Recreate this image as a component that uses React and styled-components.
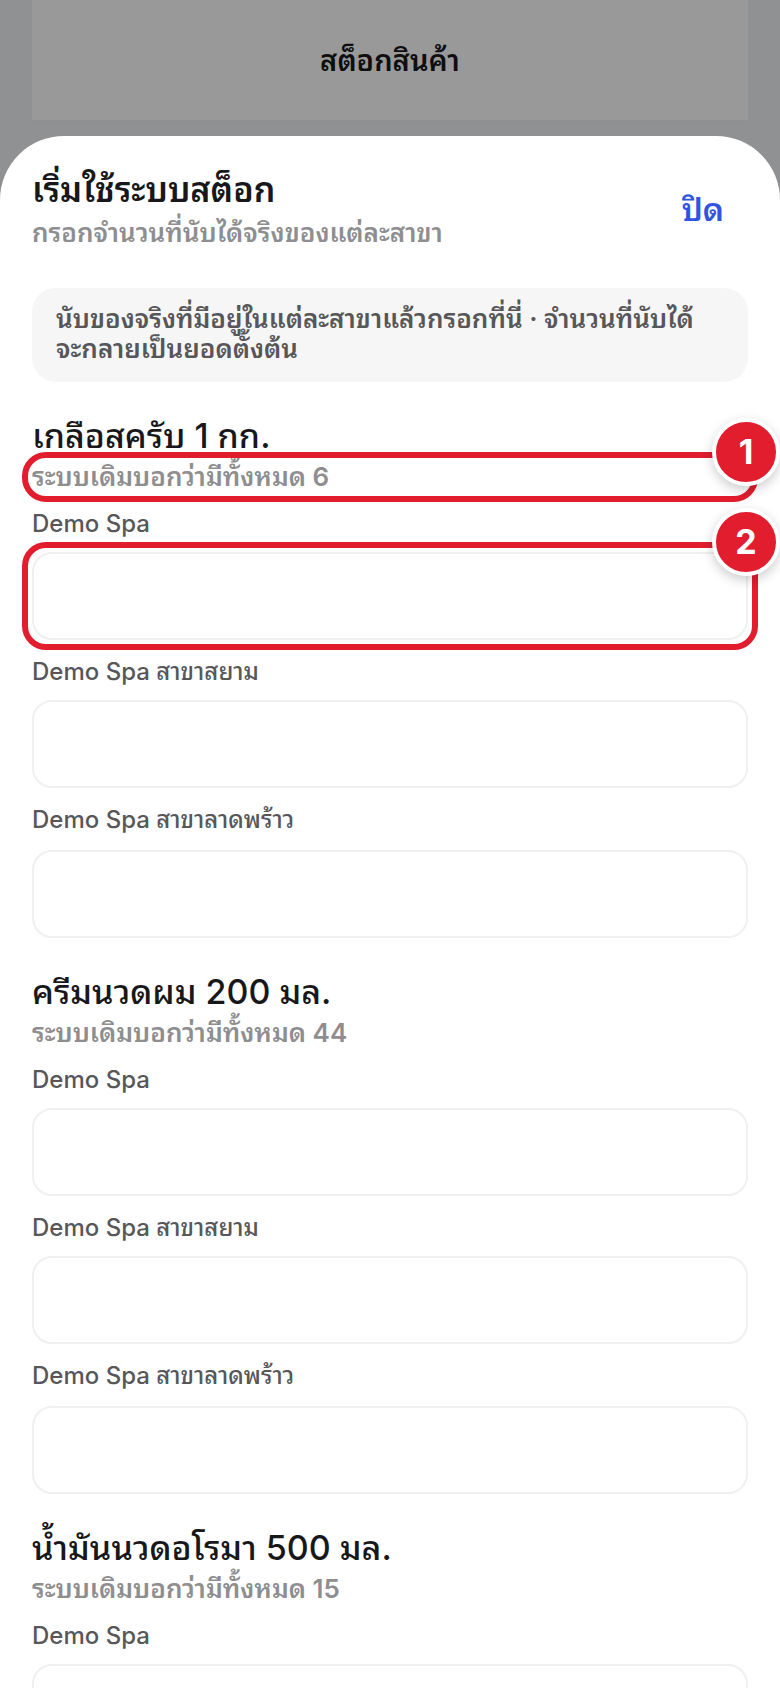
import { useState } from 'react';
import styled, { createGlobalStyle } from 'styled-components';

const branches = [
  { id: 'main', name: 'Demo Spa' },
  { id: 'siam', name: 'Demo Spa สาขาสยาม' },
  { id: 'ladprao', name: 'Demo Spa สาขาลาดพร้าว' },
];

const products = [
  { id: 'salt', name: 'เกลือสครับ 1 กก.', total: 6, guided: true },
  { id: 'cream', name: 'ครีมนวดผม 200 มล.', total: 44 },
  { id: 'oil', name: 'น้ำมันนวดอโรมา 500 มล.', total: 15 },
];

function Callout({ number }) {
  return (
    <CalloutFrame>
      <CalloutBadge>{number}</CalloutBadge>
    </CalloutFrame>
  );
}

function ProductCount({ product, counts, onChange }) {
  return (
    <Product>
      <ProductName>{product.name}</ProductName>
      <Anchor>
        <Hint>ระบบเดิมบอกว่ามีทั้งหมด {product.total}</Hint>
        {product.guided && <Callout number={1} />}
      </Anchor>
      {branches.map((branch, index) => {
        const key = `${product.id}-${branch.id}`;
        return (
          <Field key={key}>
            <Label htmlFor={key}>{branch.name}</Label>
            <Anchor>
              <CountInput
                id={key}
                inputMode="numeric"
                value={counts[key] || ''}
                onChange={(e) => onChange(key, e.target.value)}
              />
              {product.guided && index === 0 && <Callout number={2} />}
            </Anchor>
          </Field>
        );
      })}
    </Product>
  );
}

function App() {
  const [open, setOpen] = useState(true);
  const [counts, setCounts] = useState({});

  const handleChange = (key, value) => {
    setCounts((prev) => ({ ...prev, [key]: value }));
  };

  return (
    <>
      <GlobalStyle />
      <Page>
        <PageHeader>
          <PageTitle>สต็อกสินค้า</PageTitle>
        </PageHeader>
      </Page>
      {open && (
        <Overlay>
          <Sheet role="dialog" aria-labelledby="sheet-title">
            <SheetHeader>
              <div>
                <SheetTitle id="sheet-title">เริ่มใช้ระบบสต็อก</SheetTitle>
                <Hint>กรอกจำนวนที่นับได้จริงของแต่ละสาขา</Hint>
              </div>
              <CloseButton type="button" onClick={() => setOpen(false)}>
                ปิด
              </CloseButton>
            </SheetHeader>
            <Note>
              นับของจริงที่มีอยู่ในแต่ละสาขาแล้วกรอกที่นี่ · จำนวนที่นับได้
              <br />
              จะกลายเป็นยอดตั้งต้น
            </Note>
            {products.map((product) => (
              <ProductCount
                key={product.id}
                product={product}
                counts={counts}
                onChange={handleChange}
              />
            ))}
          </Sheet>
        </Overlay>
      )}
    </>
  );
}
export default App;

const GlobalStyle = createGlobalStyle`
  * {
    box-sizing: border-box;
  }
  body {
    margin: 0;
    overflow: hidden;
    background: #f0f2f4;
    color: #18181b;
    font-family: Inter, 'Noto Sans Thai Looped', Sarabun, Loma, 'Noto Sans Thai', sans-serif;
  }
  h1, h2, h3, p {
    margin: 0;
  }
`;

const Page = styled.main`
  min-height: 100vh;
  padding: 0 32px;
`;

const PageHeader = styled.header`
  display: flex;
  align-items: center;
  justify-content: center;
  height: 122px;
  border-bottom: 2px solid #f0f0f0;
  background: #ffffff;
`;

const PageTitle = styled.h1`
  padding-top: 2px;
  font-size: 29px;
  font-weight: 600;
  line-height: 40px;
`;

const Overlay = styled.div`
  position: fixed;
  inset: 0;
  display: flex;
  padding-top: 136px;
  background: rgba(0, 0, 0, 0.4);
`;

const Sheet = styled.section`
  flex: 1;
  min-width: 0;
  padding: 32px 32px 0;
  overflow-y: auto;
  scrollbar-width: none;
  background: #ffffff;
  border-radius: 64px 64px 0 0;
`;

const SheetHeader = styled.header`
  display: flex;
  align-items: center;
  justify-content: space-between;
  margin-bottom: 40px;
`;

const SheetTitle = styled.h2`
  margin-bottom: 6px;
  font-size: 34px;
  font-weight: 600;
  line-height: 44px;
`;

const Hint = styled.p`
  color: #8e8e90;
  font-size: 26px;
  font-weight: 600;
  line-height: 30px;
`;

const CloseButton = styled.button`
  padding: 20px 24px 16px;
  border: 0;
  background: none;
  color: #2f55e0;
  font: inherit;
  font-size: 32px;
  font-weight: 600;
  line-height: 40px;
  cursor: pointer;
`;

const Note = styled.p`
  padding: 16px 24px 18px;
  border-radius: 24px;
  background: #f6f6f6;
  color: #57575a;
  font-size: 26px;
  font-weight: 600;
  line-height: 30px;
`;

const Product = styled.section`
  margin-top: 32px;
`;

const ProductName = styled.h3`
  margin-bottom: 4px;
  font-size: 34px;
  font-weight: 500;
  line-height: 44px;
`;

const Anchor = styled.div`
  position: relative;
`;

const Label = styled.label`
  display: block;
  margin-bottom: 12px;
  color: #57575a;
  font-size: 24px;
  font-weight: 500;
  line-height: 32px;
`;

const Field = styled.div`
  margin-top: 16px;

  &:last-child ${Label} {
    margin-bottom: 14px;
  }
`;

const CountInput = styled.input`
  display: block;
  width: 100%;
  height: 88px;
  padding: 0 24px;
  border: 2px solid #f0f0f0;
  border-radius: 20px;
  background: #ffffff;
  color: inherit;
  font: inherit;
  font-size: 34px;
  outline: none;
`;

const CalloutFrame = styled.div`
  position: absolute;
  inset: -10px;
  z-index: 1;
  border: 6px solid #e11d2e;
  border-radius: 24px;
  pointer-events: none;
`;

const CalloutBadge = styled.span`
  position: absolute;
  top: -40px;
  right: -28px;
  display: flex;
  align-items: center;
  justify-content: center;
  width: 68px;
  height: 68px;
  border: 4px solid #ffffff;
  border-radius: 50%;
  background: #e11d2e;
  box-shadow: 0 4px 12px rgba(0, 0, 0, 0.2);
  color: #ffffff;
  font-size: 34px;
  font-weight: 700;
  line-height: 40px;
`;
